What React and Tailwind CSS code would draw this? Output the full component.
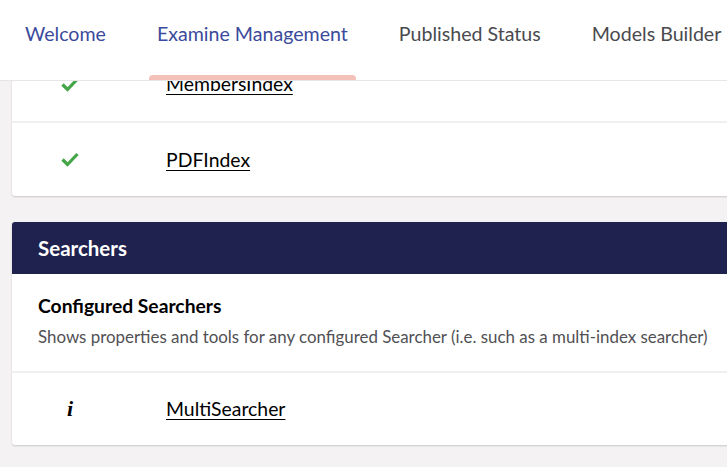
import React from "react";

const Check = () => (
  <svg width="18" height="15" viewBox="0 0 18 15" fill="none">
    <path d="M1.5 7.5 L6.5 12.5 L16.5 2" stroke="#45a549" strokeWidth="3.2" strokeLinecap="butt" strokeLinejoin="miter" />
  </svg>
);

const Row = ({ icon, label, top, h = "h-[74px]" }) => (
  <div className={`flex ${h} items-center ${top ? "border-t-2 border-[#f1f0f0]" : ""}`}>
    <div className="flex w-[116px] justify-center">{icon}</div>
    <a className="ml-[38px] text-[19.4px] leading-[24px] text-black underline decoration-1 underline-offset-[3px]">{label}</a>
  </div>
);

export default function App() {
  const tabs = [
    { label: "Welcome", color: "text-[#3b4a9c]" },
    { label: "Examine Management", color: "text-[#3b4a9c]", active: true },
    { label: "Published Status", color: "text-[#4a4a4e]" },
    { label: "Models Builder", color: "text-[#4a4a4e]" },
  ];
  return (
    <div className="h-[467px] w-[727px] overflow-hidden bg-[#f4f2f2]" style={{ fontFamily: "Lato, 'Open Sans', sans-serif" }}>
      <div className="relative z-10 h-[81px] border-b border-[#e6e6e8] bg-white">
        <div className="flex h-full gap-[51px] pl-[25px] whitespace-nowrap">
          {tabs.map((t) => (
            <div key={t.label} className="relative h-full pt-[22px]">
              <span className={`text-[19.6px] leading-[24px] ${t.color}`}>{t.label}</span>
              {t.active && (
                <div className="absolute bottom-0 left-[-8px] right-[-8px] h-[5px] rounded-t-[4px] bg-[#f3c0ba]" />
              )}
            </div>
          ))}
        </div>
      </div>
      <div className="relative h-[386px] overflow-hidden">
        <div className="ml-[12px] mt-[-34px] w-[760px] rounded-[3px] bg-white shadow-[0_1px_2px_rgba(0,0,0,0.18)]">
          <Row icon={<Check />} label="MembersIndex" />
          <Row icon={<Check />} label="PDFIndex" top h="h-[75px]" />
        </div>
        <div className="ml-[12px] mt-[26px] w-[760px] rounded-[3px] bg-white shadow-[0_1px_2px_rgba(0,0,0,0.18)]">
          <div className="flex h-[52px] items-center rounded-t-[3px] bg-[#1f214f] pl-[26px]">
            <span className="text-[20.5px] font-bold leading-[24px] text-white">Searchers</span>
          </div>
          <div className="pb-[24px] pl-[26px] pt-[20px]">
            <div className="text-[19.3px] font-bold leading-[24px] text-black">Configured Searchers</div>
            <div className="mt-[9px] whitespace-nowrap text-[16.9px] leading-[20px] text-[#515054]">
              Shows properties and tools for any configured Searcher (i.e. such as a multi-index searcher)
            </div>
          </div>
          <Row
            icon={<span className="text-[22px] font-bold italic leading-none text-black" style={{ fontFamily: "'Liberation Serif', serif" }}>i</span>}
            label="MultiSearcher"
            top
          />
        </div>
      </div>
    </div>
  );
}
